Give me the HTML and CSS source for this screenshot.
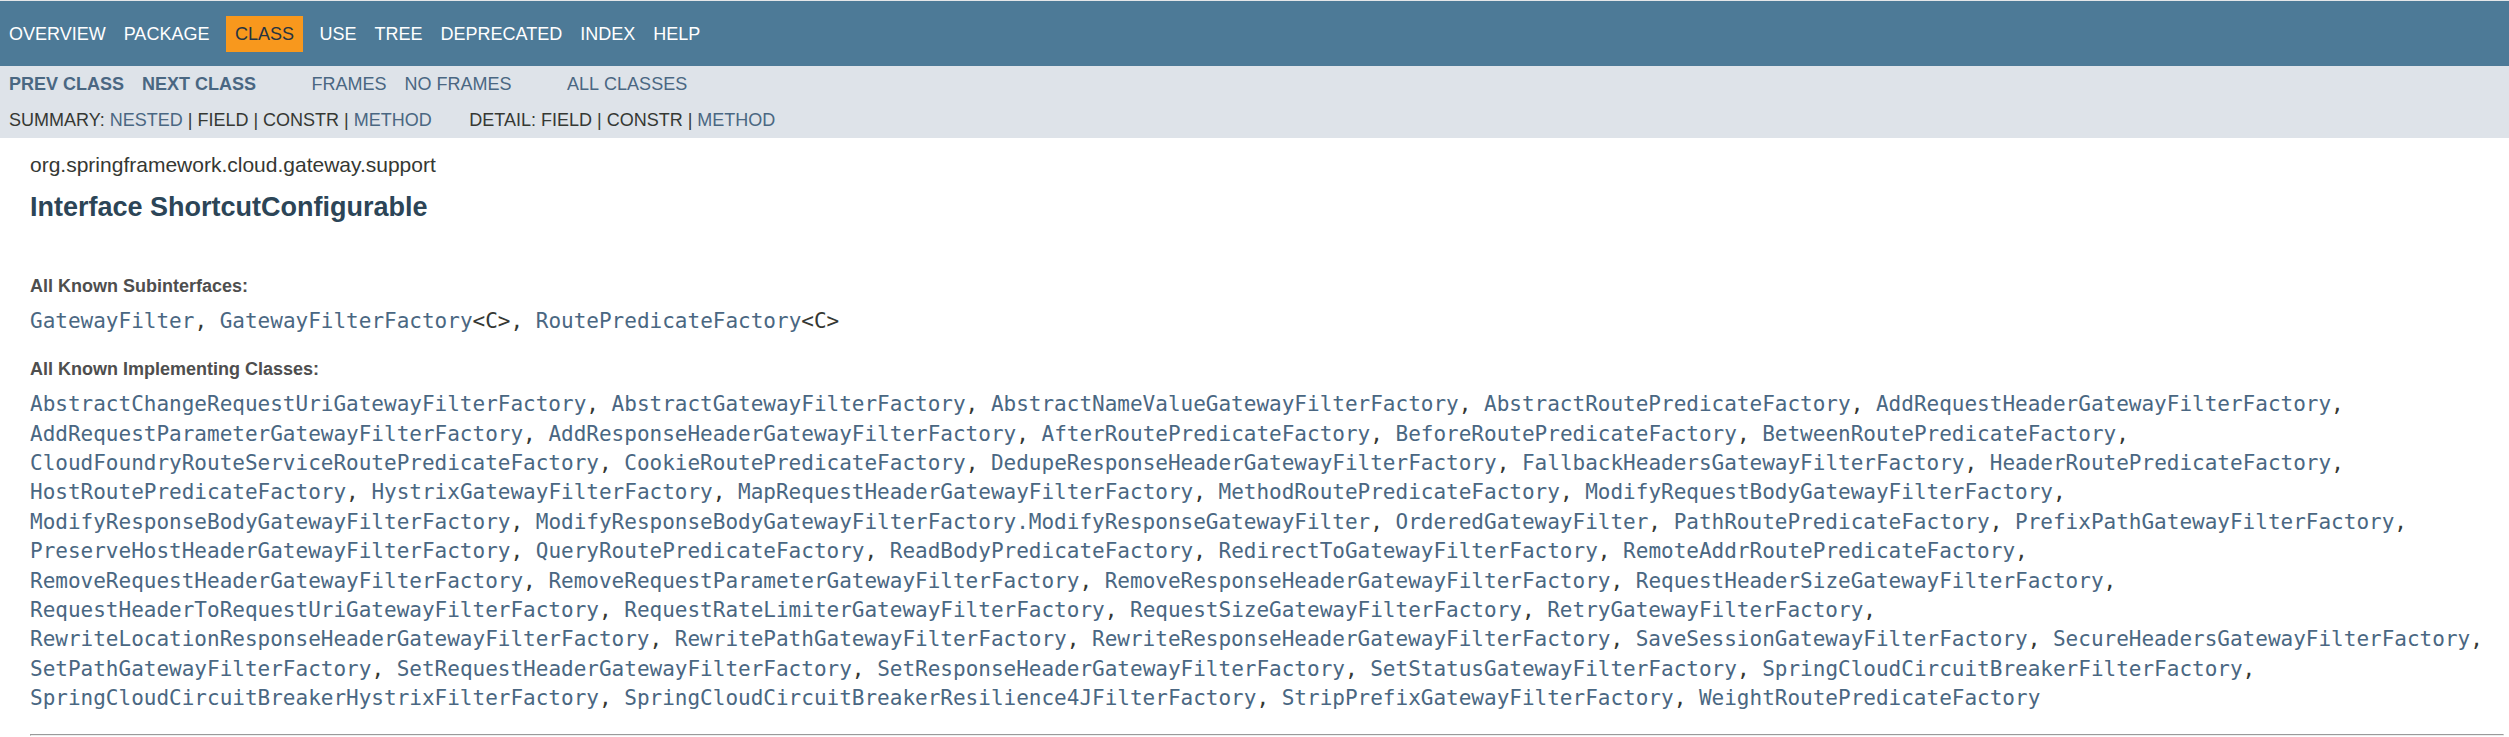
FILE: index.html
```html
<!DOCTYPE html>
<html lang="en">
<head>
<meta charset="utf-8">
<title>ShortcutConfigurable</title>
<link rel="stylesheet" href="styles.css">
</head>
<body>
<div class="topNav">
  <ul class="navList">
    <li><a href="#">Overview</a></li>
    <li><a href="#">Package</a></li>
    <li class="navBarCell1Rev">Class</li>
    <li><a href="#">Use</a></li>
    <li><a href="#">Tree</a></li>
    <li><a href="#">Deprecated</a></li>
    <li><a href="#">Index</a></li>
    <li><a href="#">Help</a></li>
  </ul>
</div>
<div class="subNav">
  <div class="subRow">
    <ul class="navList">
      <li><a href="#"><span class="typeNameLink">Prev&nbsp;Class</span></a></li>
      <li><a href="#"><span class="typeNameLink">Next&nbsp;Class</span></a></li>
    </ul>
    <ul class="navList">
      <li><a href="#">Frames</a></li>
      <li><a href="#">No&nbsp;Frames</a></li>
    </ul>
    <ul class="navList">
      <li><a href="#">All&nbsp;Classes</a></li>
    </ul>
  </div>
  <div class="subSpacer"></div>
  <div class="subDetail">
    <ul class="subNavList">
      <li>Summary:&nbsp;</li>
      <li><a href="#">Nested</a>&nbsp;|&nbsp;</li>
      <li>Field&nbsp;|&nbsp;</li>
      <li>Constr&nbsp;|&nbsp;</li>
      <li><a href="#">Method</a></li>
    </ul>
    <ul class="subNavList">
      <li>Detail:&nbsp;</li>
      <li>Field&nbsp;|&nbsp;</li>
      <li>Constr&nbsp;|&nbsp;</li>
      <li><a href="#">Method</a></li>
    </ul>
  </div>
</div>
<div class="header">
  <div class="subTitle">org.springframework.cloud.gateway.support</div>
  <h2 class="title">Interface ShortcutConfigurable</h2>
</div>
<div class="contentContainer">
  <div class="description">
    <ul class="blockList">
      <li class="blockList">
        <dl>
          <dt>All Known Subinterfaces:</dt>
          <dd><a href="#">GatewayFilter</a>, <a href="#">GatewayFilterFactory</a>&lt;C&gt;, <a href="#">RoutePredicateFactory</a>&lt;C&gt;</dd>
        </dl>
        <dl>
          <dt>All Known Implementing Classes:</dt>
          <dd><a href="#">AbstractChangeRequestUriGatewayFilterFactory</a>, <a href="#">AbstractGatewayFilterFactory</a>, <a href="#">AbstractNameValueGatewayFilterFactory</a>, <a href="#">AbstractRoutePredicateFactory</a>, <a href="#">AddRequestHeaderGatewayFilterFactory</a>, <a href="#">AddRequestParameterGatewayFilterFactory</a>, <a href="#">AddResponseHeaderGatewayFilterFactory</a>, <a href="#">AfterRoutePredicateFactory</a>, <a href="#">BeforeRoutePredicateFactory</a>, <a href="#">BetweenRoutePredicateFactory</a>, <a href="#">CloudFoundryRouteServiceRoutePredicateFactory</a>, <a href="#">CookieRoutePredicateFactory</a>, <a href="#">DedupeResponseHeaderGatewayFilterFactory</a>, <a href="#">FallbackHeadersGatewayFilterFactory</a>, <a href="#">HeaderRoutePredicateFactory</a>, <a href="#">HostRoutePredicateFactory</a>, <a href="#">HystrixGatewayFilterFactory</a>, <a href="#">MapRequestHeaderGatewayFilterFactory</a>, <a href="#">MethodRoutePredicateFactory</a>, <a href="#">ModifyRequestBodyGatewayFilterFactory</a>, <a href="#">ModifyResponseBodyGatewayFilterFactory</a>, <a href="#">ModifyResponseBodyGatewayFilterFactory.ModifyResponseGatewayFilter</a>, <a href="#">OrderedGatewayFilter</a>, <a href="#">PathRoutePredicateFactory</a>, <a href="#">PrefixPathGatewayFilterFactory</a>, <a href="#">PreserveHostHeaderGatewayFilterFactory</a>, <a href="#">QueryRoutePredicateFactory</a>, <a href="#">ReadBodyPredicateFactory</a>, <a href="#">RedirectToGatewayFilterFactory</a>, <a href="#">RemoteAddrRoutePredicateFactory</a>, <a href="#">RemoveRequestHeaderGatewayFilterFactory</a>, <a href="#">RemoveRequestParameterGatewayFilterFactory</a>, <a href="#">RemoveResponseHeaderGatewayFilterFactory</a>, <a href="#">RequestHeaderSizeGatewayFilterFactory</a>, <a href="#">RequestHeaderToRequestUriGatewayFilterFactory</a>, <a href="#">RequestRateLimiterGatewayFilterFactory</a>, <a href="#">RequestSizeGatewayFilterFactory</a>, <a href="#">RetryGatewayFilterFactory</a>, <a href="#">RewriteLocationResponseHeaderGatewayFilterFactory</a>, <a href="#">RewritePathGatewayFilterFactory</a>, <a href="#">RewriteResponseHeaderGatewayFilterFactory</a>, <a href="#">SaveSessionGatewayFilterFactory</a>, <a href="#">SecureHeadersGatewayFilterFactory</a>, <a href="#">SetPathGatewayFilterFactory</a>, <a href="#">SetRequestHeaderGatewayFilterFactory</a>, <a href="#">SetResponseHeaderGatewayFilterFactory</a>, <a href="#">SetStatusGatewayFilterFactory</a>, <a href="#">SpringCloudCircuitBreakerFilterFactory</a>, <a href="#">SpringCloudCircuitBreakerHystrixFilterFactory</a>, <a href="#">SpringCloudCircuitBreakerResilience4JFilterFactory</a>, <a href="#">StripPrefixGatewayFilterFactory</a>, <a href="#">WeightRoutePredicateFactory</a></dd>
        </dl>
        <hr class="rule">
      </li>
    </ul>
  </div>
</div>
</body>
</html>
```

FILE: styles.css
```css
html, body {
  margin: 0;
  padding: 0;
}
body {
  background-color: #ffffff;
  color: #353833;
  font-family: "Liberation Sans", Arial, Helvetica, sans-serif;
  font-size: 21px;
  border-top: 1px solid #e4e6e8;
}
a:link, a:visited {
  color: #4A6782;
  text-decoration: none;
}

.topNav {
  background-color: #4D7A97;
  color: #ffffff;
  height: 50.4px;
  padding-top: 15px;
  overflow: hidden;
  font-size: 18px;
}
.topNav a:link, .topNav a:visited {
  color: #ffffff;
}
ul.navList {
  display: flex;
  margin: 0 37.5px 0 0;
  padding: 0;
  list-style: none;
}
ul.navList li {
  padding: 7.5px 9px;
  text-transform: uppercase;
  white-space: nowrap;
}
.topNav li.navBarCell1Rev {
  background-color: #F8981D;
  color: #253441;
  margin: 0 7.5px;
}

.subNav {
  background-color: #dee3e9;
  font-size: 18px;
  overflow: hidden;
}
.subRow {
  display: flex;
}
.subSpacer {
  height: 7.5px;
}
.subDetail {
  display: flex;
  padding: 0 0 7.5px 9px;
  text-transform: uppercase;
}
ul.subNavList {
  display: flex;
  margin: 0 37.5px 0 0;
  padding: 0;
  list-style: none;
  white-space: nowrap;
}
.typeNameLink {
  font-weight: bold;
}

.header {
  margin: 0 30px;
  padding: 7.5px 0 0 0;
}
.subTitle {
  margin: 7.5px 0 0 0;
}
.title {
  color: #2c4557;
  font-size: 27px;
  font-weight: bold;
  margin: 15px 0;
}

.contentContainer {
  padding: 15px 5px 15px 30px;
}
ul.blockList {
  margin: 15px 0;
  padding: 0;
  list-style: none;
}
li.blockList {
  margin-bottom: 22.5px;
  line-height: 1.4;
}
.description dl {
  margin: 21px 0;
}
.description dt {
  font-size: 18px;
  font-weight: bold;
  color: #4E4E4E;
  margin: 15px 0 0 0;
}
.description dd {
  margin: 7.5px 0 15px 0;
  font-family: "DejaVu Sans Mono", monospace;
  font-size: 21px;
}
.rule {
  margin: 10.5px 0;
  border: 1px inset;
  color: gray;
  height: 0;
}
```
